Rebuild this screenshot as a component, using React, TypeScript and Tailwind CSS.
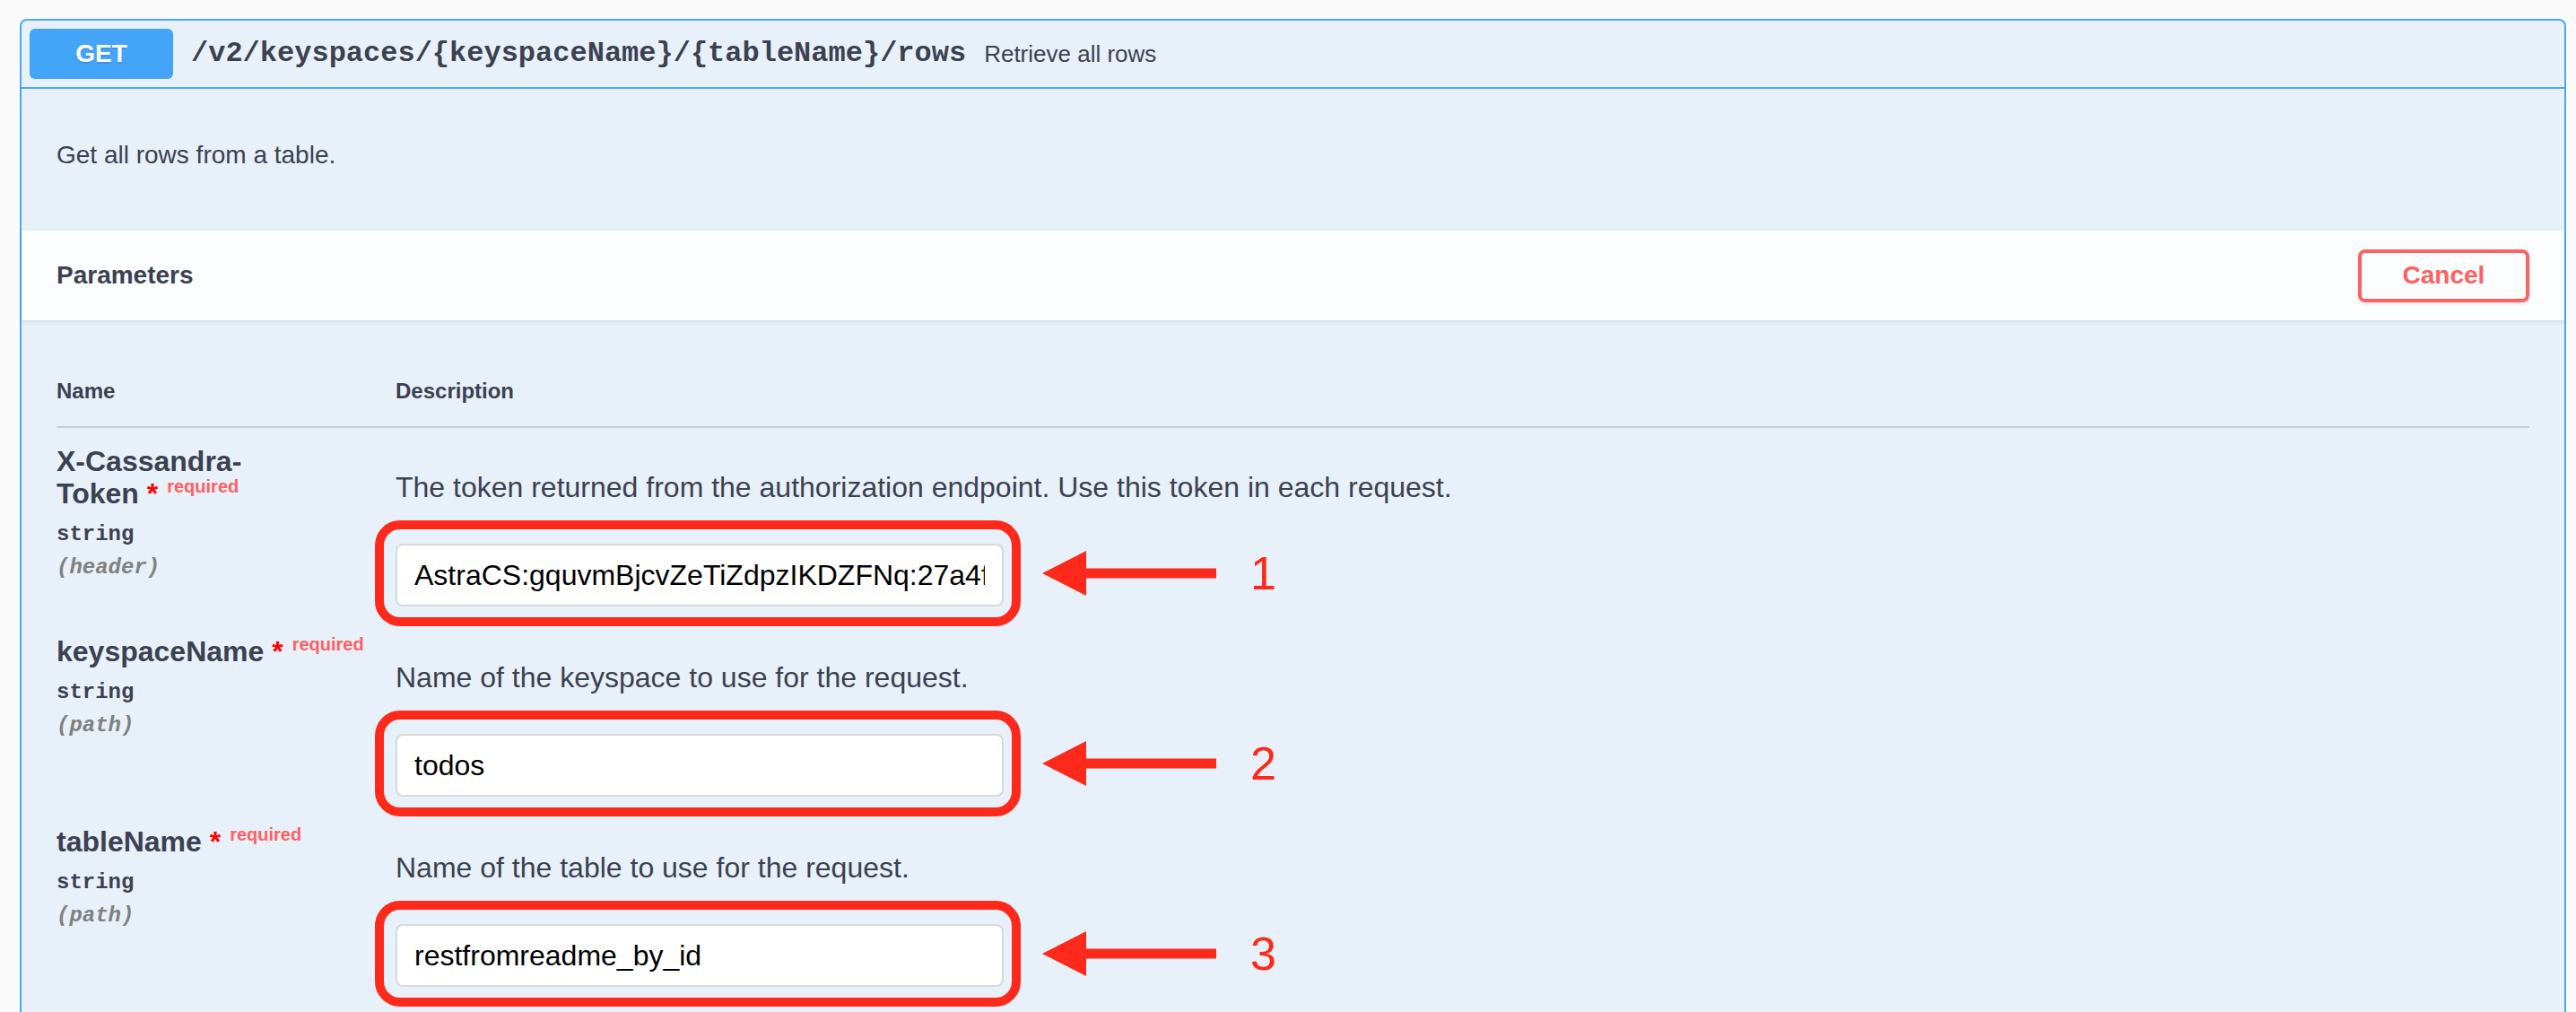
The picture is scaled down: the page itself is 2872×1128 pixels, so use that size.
import React from 'react';

const params = [
  {
    name: ['X-Cassandra-', 'Token'],
    loc: '(header)',
    desc: 'The token returned from the authorization endpoint. Use this token in each request.',
    value: 'AstraCS:gquvmBjcvZeTiZdpzIKDZFNq:27a4f0c9d1e2b3a4f5c6d7e8f9a0b1c2d3e4f5a6b7c8d9e0f1a2b3c4d5e6f7a8',
    num: '1',
  },
  {
    name: ['keyspaceName'],
    loc: '(path)',
    desc: 'Name of the keyspace to use for the request.',
    value: 'todos',
    num: '2',
  },
  {
    name: ['tableName'],
    loc: '(path)',
    desc: 'Name of the table to use for the request.',
    value: 'restfromreadme_by_id',
    num: '3',
  },
];

// red annotation arrow pointing left
const Arrow = () => (
  <svg width="194" height="50" viewBox="0 0 194 50" className="shrink-0">
    <polygon points="0,25 49,0 49,19.5 194,19.5 194,30.5 49,30.5 49,50" fill="#fd2a1b" />
  </svg>
);

const ParamRow = ({ p }: { p: (typeof params)[number] }) => {
  return (
    <div className="flex pb-[10px]">
      {/* name column */}
      <div className="w-[378px] shrink-0">
        <div className="text-[32px] font-bold leading-[36px] text-[#3b4151]">
          {p.name.map((n, i) => (
            <React.Fragment key={i}>
              {i > 0 && <br />}
              {n}
            </React.Fragment>
          ))}
          <span className="text-[#ff0000]">&nbsp;*</span>
          <span className="relative top-[-12px] px-[10px] text-[20px] font-bold text-[#ff6060]">required</span>
        </div>
        <div className="py-[10px] font-['Liberation_Mono',monospace] text-[24px] font-bold leading-[27px] text-[#3b4151]">
          string
        </div>
        <div className="font-['Liberation_Mono',monospace] text-[24px] font-bold italic leading-[27px] text-[#808080]">
          {p.loc}
        </div>
      </div>
      {/* description column */}
      <div className="flex flex-col pt-[29px]">
        <p className="text-[32px] leading-[37px] text-[#3b4151]">{p.desc}</p>
        <div className="-ml-[23px] mt-[18px] flex items-center">
          <div className="rounded-[28px] border-[10px] border-[#fd2a1b] pb-[12px] pl-[13px] pr-[9px] pt-[16px]">
            <input
              readOnly
              defaultValue={p.value}
              className="block h-[70px] w-[678px] rounded-[8px] border-2 border-[#d9d9d9] bg-white px-[19px] text-[32px] text-black outline-none"
            />
          </div>
          <div className="ml-[24px] flex items-center">
            <Arrow />
            <span className="ml-[38px] text-[52px] leading-[60px] text-[#fd2a1b]">{p.num}</span>
          </div>
        </div>
      </div>
    </div>
  );
};

export default function App() {
  return (
    <div className="h-[1128px] w-[2872px] overflow-hidden bg-[#fafafa] pt-[21px] font-['Liberation_Sans',Arial,sans-serif]">
      <div className="ml-[22px] h-[1200px] w-[2839px] rounded-[8px] border-2 border-[#4aa7f9] bg-[#e8f1fa]">
        {/* summary */}
        <div className="flex items-center border-b-2 border-[#4aa7f9] p-[9px]">
          <div className="flex h-[56px] w-[160px] items-center justify-center rounded-[6px] bg-[#43a4f8] text-[28px] font-bold text-white [text-shadow:0_2px_0_rgba(0,0,0,0.1)]">
            GET
          </div>
          <span className="pl-[20px] pr-[20px] font-['Liberation_Mono',monospace] text-[32px] font-bold text-[#3b4151]">
            /v2/keyspaces/{'{keyspaceName}'}/{'{tableName}'}/rows
          </span>
          <span className="text-[26px] text-[#3b4151]">Retrieve all rows</span>
        </div>

        {/* description */}
        <div className="pb-[68px] pl-[39px] pt-[58px]">
          <p className="text-[28px] leading-[32px] text-[#3b4151]">Get all rows from a table.</p>
        </div>

        {/* parameters header */}
        <div className="flex h-[100px] items-center justify-between bg-[#fbfdfe] px-[39px] shadow-[0_2px_4px_rgba(0,0,0,0.1)]">
          <h4 className="text-[28px] font-bold leading-[32px] text-[#3b4151]">Parameters</h4>
          <button className="flex h-[59px] w-[191px] items-center justify-center rounded-[8px] border-4 border-[#ff6060] text-[28px] font-bold text-[#ff6060] shadow-[0_2px_4px_rgba(0,0,0,0.1)]">
            Cancel
          </button>
        </div>

        {/* table */}
        <div className="px-[39px] pt-[40px]">
          <div className="flex border-b-2 border-[#c5ced8] py-[25px] text-[24px] font-bold leading-[28px] text-[#3b4151]">
            <div className="w-[378px]">Name</div>
            <div>Description</div>
          </div>
          <div className="pt-[19px]">
            {params.map((p) => (
              <ParamRow key={p.num} p={p} />
            ))}
          </div>
        </div>
      </div>
    </div>
  );
}
